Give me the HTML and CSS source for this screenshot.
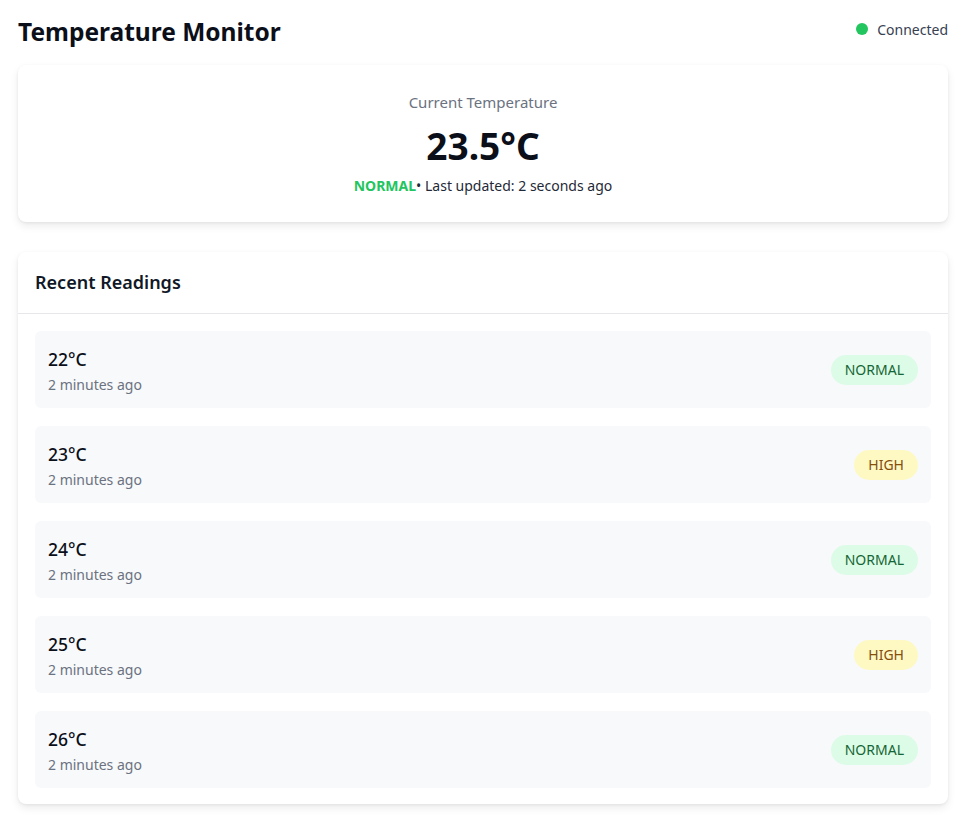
FILE: index.html
```html
<!DOCTYPE html>
<html lang="en">
<head>
<meta charset="utf-8">
<title>Temperature Monitor</title>
<link rel="stylesheet" href="styles.css">
</head>
<body>
<div class="page">
  <header class="topbar">
    <h1 class="title">Temperature Monitor</h1>
    <div class="status"><span class="dot"></span><span>Connected</span></div>
  </header>

  <section class="card current">
    <div class="current-label">Current Temperature</div>
    <div class="current-value">23.5°C</div>
    <div class="current-meta"><span class="ok">NORMAL</span>• Last updated: 2 seconds ago</div>
  </section>

  <section class="card readings">
    <div class="readings-head">Recent Readings</div>
    <div class="list">
      <div class="item">
        <div class="item-text"><div class="temp">22°C</div><div class="ago">2 minutes ago</div></div>
        <span class="badge normal">NORMAL</span>
      </div>
      <div class="item">
        <div class="item-text"><div class="temp">23°C</div><div class="ago">2 minutes ago</div></div>
        <span class="badge high">HIGH</span>
      </div>
      <div class="item">
        <div class="item-text"><div class="temp">24°C</div><div class="ago">2 minutes ago</div></div>
        <span class="badge normal">NORMAL</span>
      </div>
      <div class="item">
        <div class="item-text"><div class="temp">25°C</div><div class="ago">2 minutes ago</div></div>
        <span class="badge high">HIGH</span>
      </div>
      <div class="item">
        <div class="item-text"><div class="temp">26°C</div><div class="ago">2 minutes ago</div></div>
        <span class="badge normal">NORMAL</span>
      </div>
    </div>
  </section>
</div>
</body>
</html>
```

FILE: styles.css
```css
* { box-sizing: border-box; }
html, body { margin: 0; padding: 0; background: #ffffff; }
body {
  font-family: "Noto Sans", "Open Sans", "Liberation Sans", sans-serif;
  color: #111827;
}
.page {
  padding: 10px 13px 14px 18px;
}
.topbar {
  display: flex;
  align-items: center;
  justify-content: space-between;
  height: 42px;
  margin-bottom: 13px;
}
.title {
  margin: 0;
  font-size: 24.5px;
  font-weight: 700;
  color: #0b0f19;
}
.status {
  display: flex;
  align-items: center;
  gap: 9px;
  font-size: 14px;
  color: #374151;
  margin-bottom: 4px;
}
.dot {
  width: 12px;
  height: 12px;
  border-radius: 50%;
  background: #22c55e;
}
.card {
  background: #fff;
  border-radius: 8px;
  box-shadow: 0 4px 8px rgba(0,0,0,0.08), 0 1px 3px rgba(0,0,0,0.06);
}
.current {
  height: 157px;
  padding-top: 26px;
  text-align: center;
  margin-bottom: 30px;
}
.current-label {
  font-size: 15px;
  color: #6b7280;
  line-height: 22px;
}
.current-value {
  font-size: 37px;
  font-weight: 700;
  color: #0b0f19;
  line-height: 50px;
  margin-top: 8px;
}
.current-meta {
  font-size: 14px;
  color: #1f2937;
  line-height: 20px;
  margin-top: 5px;
}
.ok { color: #22c55e; font-weight: 700; }
.readings-head {
  height: 62px;
  display: flex;
  align-items: center;
  padding: 0 17px 2px;
  font-size: 18px;
  font-weight: 600;
  border-bottom: 1px solid #e5e7eb;
}
.list {
  display: flex;
  flex-direction: column;
  gap: 18px;
  padding: 17px 17px 16px 17px;
}
.item {
  height: 77px;
  background: #f8f9fb;
  border-radius: 6px;
  display: flex;
  align-items: center;
  justify-content: space-between;
  padding: 0 13px;
}
.item-text { padding-top: 3px; }
.temp {
  font-size: 17.5px;
  font-weight: 500;
  color: #0b0f19;
  line-height: 24px;
}
.ago {
  font-size: 14px;
  color: #6b7280;
  line-height: 20px;
  margin-top: 4px;
}
.badge {
  height: 30px;
  display: inline-flex;
  align-items: center;
  padding: 0 14px;
  border-radius: 15px;
  font-size: 14px;
}
.badge.normal { background: #dcfce7; color: #166534; }
.badge.high { background: #fef9c3; color: #854d0e; }
```
